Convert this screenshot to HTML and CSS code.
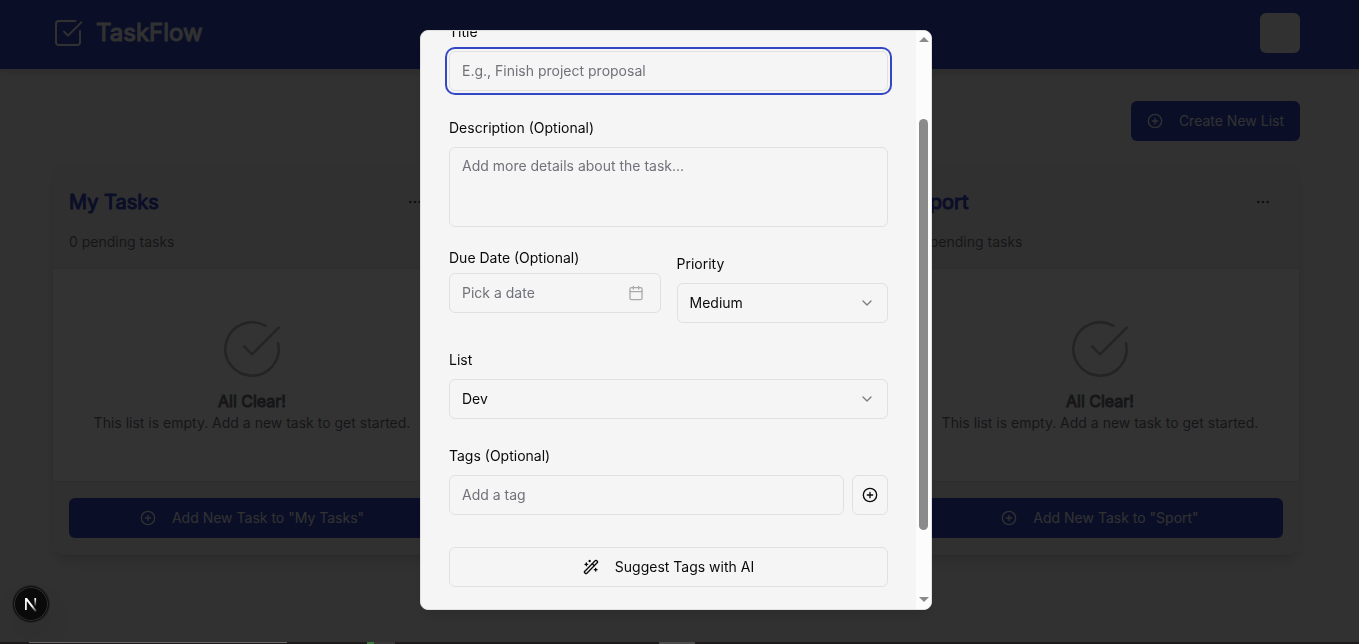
FILE: index.html
```html
<!DOCTYPE html>
<html lang="en">
<head>
<meta charset="utf-8">
<meta name="viewport" content="width=device-width, initial-scale=1">
<title>TaskFlow</title>
<link rel="stylesheet" href="styles.css">
</head>
<body>
<svg class="sprite" aria-hidden="true">
  <symbol id="plus-circle" viewBox="0 0 24 24"><circle cx="12" cy="12" r="10"/><path d="M8 12h8M12 8v8"/></symbol>
  <symbol id="dots" viewBox="0 0 24 24"><circle cx="12" cy="12" r="1"/><circle cx="19" cy="12" r="1"/><circle cx="5" cy="12" r="1"/></symbol>
  <symbol id="circle-check" viewBox="0 0 24 24"><path d="M21.801 10A10 10 0 1 1 17 3.335"/><path d="m9 11 3 3L22 4"/></symbol>
  <symbol id="chevron" viewBox="0 0 24 24"><path d="m6 9 6 6 6-6"/></symbol>
</svg>

<header class="topbar">
  <div class="container topbar-row">
    <a class="brand" href="#">
      <svg class="icon brand-icon" viewBox="0 0 24 24"><path d="M21 10.5V19a2 2 0 0 1-2 2H5a2 2 0 0 1-2-2V5a2 2 0 0 1 2-2h12.5"/><path d="m9 11 3 3L22 4"/></svg>
      <span>TaskFlow</span>
    </a>
    <button class="theme-btn" type="button" aria-label="Toggle theme">
      <svg class="icon" viewBox="0 0 24 24"><circle cx="12" cy="12" r="4"/><path d="M12 2v2M12 20v2M4.9 4.9l1.4 1.4M17.7 17.7l1.4 1.4M2 12h2M20 12h2M6.3 17.7l-1.4 1.4M19.1 4.9l-1.4 1.4"/></svg>
    </button>
  </div>
</header>

<main class="main">
  <div class="container main-col">
    <button class="btn btn-primary create" type="button"><svg class="icon"><use href="#plus-circle"/></svg>Create New List</button>
    <div class="lists">
      <section class="card">
        <div class="card-head">
          <div class="card-title-row"><h2>My Tasks</h2><button class="menu-btn" type="button" aria-label="List options"><svg class="icon"><use href="#dots"/></svg></button></div>
          <p class="card-sub">0 pending tasks</p>
        </div>
        <div class="card-body">
          <svg class="icon icon-empty"><use href="#circle-check"/></svg>
          <h3>All Clear!</h3>
          <p>This list is empty. Add a new task to get started.</p>
        </div>
        <div class="card-foot"><button class="btn btn-primary" type="button"><svg class="icon"><use href="#plus-circle"/></svg>Add New Task to "My Tasks"</button></div>
      </section>
      <section class="card">
        <div class="card-head">
          <div class="card-title-row"><h2>Dev</h2><button class="menu-btn" type="button" aria-label="List options"><svg class="icon"><use href="#dots"/></svg></button></div>
          <p class="card-sub">0 pending tasks</p>
        </div>
        <div class="card-body"></div>
        <div class="card-foot"></div>
      </section>
      <section class="card">
        <div class="card-head">
          <div class="card-title-row"><h2>Sport</h2><button class="menu-btn" type="button" aria-label="List options"><svg class="icon"><use href="#dots"/></svg></button></div>
          <p class="card-sub">0 pending tasks</p>
        </div>
        <div class="card-body">
          <svg class="icon icon-empty"><use href="#circle-check"/></svg>
          <h3>All Clear!</h3>
          <p>This list is empty. Add a new task to get started.</p>
        </div>
        <div class="card-foot"><button class="btn btn-primary" type="button"><svg class="icon"><use href="#plus-circle"/></svg>Add New Task to "Sport"</button></div>
      </section>
    </div>
  </div>
</main>

<div class="overlay">
  <div class="dialog" role="dialog" aria-modal="true" aria-label="Add task">
    <form class="form">
      <div class="field">
        <label for="title">Title</label>
        <input class="control control-focus" id="title" type="text" placeholder="E.g., Finish project proposal">
      </div>
      <div class="field">
        <label for="desc">Description (Optional)</label>
        <textarea class="control area" id="desc" placeholder="Add more details about the task..."></textarea>
      </div>
      <div class="pair">
        <div class="field">
          <label class="label-tight" for="due">Due Date (Optional)</label>
          <button class="control date" id="due" type="button">Pick a date
            <svg class="icon" viewBox="0 0 24 24"><path d="M8 2v4M16 2v4"/><rect width="18" height="18" x="3" y="4" rx="2"/><path d="M3 10h18"/></svg>
          </button>
        </div>
        <div class="field">
          <label for="priority">Priority</label>
          <div class="select">
            <select class="control" id="priority"><option>Low</option><option selected>Medium</option><option>High</option></select>
            <svg class="icon"><use href="#chevron"/></svg>
          </div>
        </div>
      </div>
      <div class="field">
        <label for="list">List</label>
        <div class="select">
          <select class="control" id="list"><option>My Tasks</option><option selected>Dev</option><option>Sport</option></select>
          <svg class="icon"><use href="#chevron"/></svg>
        </div>
      </div>
      <div class="field">
        <label for="tag">Tags (Optional)</label>
        <div class="tag-row">
          <input class="control" id="tag" type="text" placeholder="Add a tag">
          <button class="tag-add" type="button" aria-label="Add tag"><svg class="icon"><use href="#plus-circle"/></svg></button>
        </div>
      </div>
      <button class="btn btn-outline" type="button">
        <svg class="icon" viewBox="0 0 24 24"><path d="m21.64 3.64-1.28-1.28a1.21 1.21 0 0 0-1.72 0L2.36 18.64a1.21 1.21 0 0 0 0 1.72l1.28 1.28a1.2 1.2 0 0 0 1.72 0L21.64 5.36a1.2 1.2 0 0 0 0-1.72"/><path d="m14 7 3 3M5 6v4M19 14v4M10 2v2M7 8H3M21 16h-4M11 3H9"/></svg>
        Suggest Tags with AI
      </button>
    </form>
    <div class="scrollbar" aria-hidden="true">
      <span class="arrow arrow-up"></span>
      <div class="track"><div class="thumb"></div></div>
      <span class="arrow arrow-down"></span>
    </div>
  </div>
</div>

<button class="dev-badge" type="button" aria-label="Open dev tools">
  <svg viewBox="0 0 40 40" fill="none">
    <defs>
      <linearGradient id="diag" x1="21" y1="22" x2="27" y2="29" gradientUnits="userSpaceOnUse"><stop stop-color="#fff"/><stop offset="1" stop-color="#fff" stop-opacity="0.1"/></linearGradient>
      <linearGradient id="stem" x1="25" y1="14" x2="25" y2="23" gradientUnits="userSpaceOnUse"><stop stop-color="#fff"/><stop offset="1" stop-color="#fff" stop-opacity="0"/></linearGradient>
    </defs>
    <path d="M13 27V13h2.300L26.800 28l-1.800 1.400L15 16.500V27z" fill="url(#diag)"/>
    <path d="M25 13v10.500" stroke="url(#stem)" stroke-width="2"/>
  </svg>
</button>
<div class="window-edge" aria-hidden="true"></div>
</body>
</html>
```
FILE: styles.css
```css
:root {
  --primary: #3346c4;
  --surface: #f5f5f5;
  --muted: #f0f0f0;
  --border: #e0e0e0;
  --text: #0a0a0a;
  --muted-text: #71717a;
  --gutter: 7px;
}

* { box-sizing: border-box; }

body {
  margin: 0;
  min-height: 100vh;
  overflow: hidden;
  background: var(--surface);
  color: var(--text);
  font-family: Inter, "Liberation Sans", sans-serif;
  font-size: 14px;
  line-height: 20px;
}

h2, h3, p { margin: 0; }
button, input, select, textarea { font: inherit; color: inherit; }

.sprite { display: none; }

.icon {
  flex: none;
  width: 16px;
  height: 16px;
  fill: none;
  stroke: currentColor;
  stroke-width: 2;
  stroke-linecap: round;
  stroke-linejoin: round;
}

.container {
  max-width: 1280px;
  margin: 0 auto;
  padding: 0 16px;
}

.topbar {
  padding: 13px var(--gutter) 16px 0;
  background: var(--primary);
  color: var(--surface);
  box-shadow: 0 4px 6px rgba(0, 0, 0, .1);
}

.topbar-row { display: flex; align-items: center; justify-content: space-between; }

.brand {
  display: flex;
  align-items: center;
  gap: 12px;
  color: inherit;
  font-size: 24px;
  line-height: 32px;
  text-decoration: none;
}

.brand span, .card-title-row h2, .card-body h3 {
  font-weight: 400;
  -webkit-text-stroke: 1px currentColor;
}

.brand-icon { width: 32px; height: 32px; stroke-width: 1.5; }

.theme-btn {
  display: grid;
  place-items: center;
  width: 40px;
  height: 40px;
  padding: 0;
  border: 0;
  border-radius: 6px;
  background: var(--surface);
  color: #fafafa;
}

.main { padding: 32px var(--gutter) 32px 0; }
.main-col { display: flex; flex-direction: column; gap: 24px; }

.btn {
  display: flex;
  align-items: center;
  justify-content: center;
  gap: 16px;
  height: 40px;
  padding: 0 16px;
  border: 0;
  border-radius: 6px;
}

.btn-primary { background: var(--primary); color: var(--surface); }
.create { align-self: flex-end; }

.lists { display: grid; grid-template-columns: repeat(3, 1fr); gap: 24px; }

.card {
  display: flex;
  flex-direction: column;
  overflow: hidden;
  border: 1px solid #ebebeb;
  border-radius: 12px;
  background: #fff;
  box-shadow: 0 10px 15px -3px rgba(0, 0, 0, .1), 0 4px 6px -4px rgba(0, 0, 0, .1);
}

.card-head {
  display: flex;
  flex-direction: column;
  gap: 10px;
  padding: 16px;
  border-bottom: 1px solid #e6e6e6;
  background: var(--muted);
}

.card-title-row { display: flex; align-items: center; justify-content: space-between; }
.card-title-row h2 { color: var(--primary); font-size: 20px; line-height: 28px; }
.card-sub { color: var(--muted-text); }

.menu-btn {
  display: grid;
  place-items: center;
  width: 40px;
  height: 40px;
  padding: 0;
  border: 0;
  background: none;
  color: #52525b;
}

.card-body {
  display: flex;
  flex: 1;
  flex-direction: column;
  align-items: center;
  padding: 48px 16px;
  color: var(--muted-text);
  text-align: center;
}

.icon-empty { width: 64px; height: 64px; margin-bottom: 8px; stroke-width: 1; color: #b4b4b8; }
.card-body h3 { font-size: 16px; line-height: 24px; }

.card-foot {
  padding: 16px;
  border-top: 1px solid #e6e6e6;
  background: var(--muted);
}

.card-foot .btn { width: 100%; }

.overlay {
  position: fixed;
  inset: 0;
  display: flex;
  align-items: center;
  justify-content: center;
  padding: 0 var(--gutter) 4px 0;
  background: rgba(0, 0, 0, .8);
}

.dialog {
  display: flex;
  width: 100%;
  max-width: 512px;
  height: 90vh;
  overflow: hidden;
  border: 1px solid var(--border);
  border-radius: 8px;
  background: var(--surface);
  box-shadow: 0 10px 15px -3px rgba(0, 0, 0, .1);
}

.form {
  display: flex;
  flex: 1;
  flex-direction: column;
  justify-content: flex-end;
  gap: 24px;
  min-width: 0;
  padding: 0 28px 22px;
}

.field { display: flex; flex-direction: column; gap: 6px; }
.field label { line-height: 26px; }
.field .label-tight { margin-bottom: 2px; line-height: 14px; }

.control {
  width: 100%;
  height: 40px;
  padding: 0 12px;
  border: 1px solid var(--border);
  border-radius: 6px;
  outline: 0;
  background: var(--surface);
}

.control::placeholder { color: var(--muted-text); opacity: 1; }
.control-focus { box-shadow: 0 0 0 2px var(--surface), 0 0 0 4px var(--primary); }
.area { display: block; height: 80px; padding: 8px 12px; resize: none; }

.pair { display: grid; grid-template-columns: 1fr 1fr; gap: 16px; }

.date {
  display: flex;
  align-items: center;
  justify-content: space-between;
  padding-right: 16px;
  color: var(--muted-text);
  text-align: left;
}

.date .icon { color: #000; opacity: .3; }

.select { position: relative; }
.select select { appearance: none; }
.select .icon { position: absolute; top: 12px; right: 13px; opacity: .5; pointer-events: none; }

.tag-row { display: flex; gap: 8px; }
.tag-row .control { flex: 1; min-width: 0; }

.tag-add {
  display: grid;
  place-items: center;
  width: 36px;
  height: 40px;
  padding: 0;
  border: 1px solid var(--border);
  border-radius: 6px;
  background: var(--surface);
}

.btn-outline { flex: none; margin-top: 8px; border: 1px solid var(--border); background: var(--surface); }

.scrollbar {
  display: flex;
  flex-direction: column;
  align-items: center;
  justify-content: space-between;
  width: 15px;
  padding: 6px 0 7px;
  background: #fcfcfc;
}

.arrow { border: 5px solid transparent; border-top-width: 0; border-bottom-width: 0; }
.arrow-up { border-bottom: 5px solid #8b8b8b; }
.arrow-down { border-top: 5px solid #8b8b8b; }
.track { flex: 1; padding: 77px 0 67px; }
.thumb { width: 9px; height: 100%; border-radius: 5px; background: #8b8b8b; }

.dev-badge {
  position: fixed;
  bottom: 22px;
  left: 13px;
  width: 36px;
  height: 36px;
  padding: 0;
  border: 1px solid #101010;
  border-radius: 50%;
  background: #0a0a0a;
  box-shadow: inset 0 0 0 1px #303030, 0 0 0 1px #262626, 0 16px 32px -8px rgba(0, 0, 0, .24);
}

.dev-badge svg { display: block; width: 100%; height: 100%; }

.window-edge {
  position: fixed;
  inset: auto 0 0;
  height: 2px;
  background:
    linear-gradient(#686868, #686868) 29px 0 / 258px 1px no-repeat,
    linear-gradient(#3c7a3c, #3c7a3c) 367px 0 / 7px 2px no-repeat,
    linear-gradient(#363636, #363636) 374px 0 / 21px 2px no-repeat,
    linear-gradient(#4c4c4c, #4c4c4c) 659px 0 / 36px 2px no-repeat,
    #1e1a1c;
}
```
